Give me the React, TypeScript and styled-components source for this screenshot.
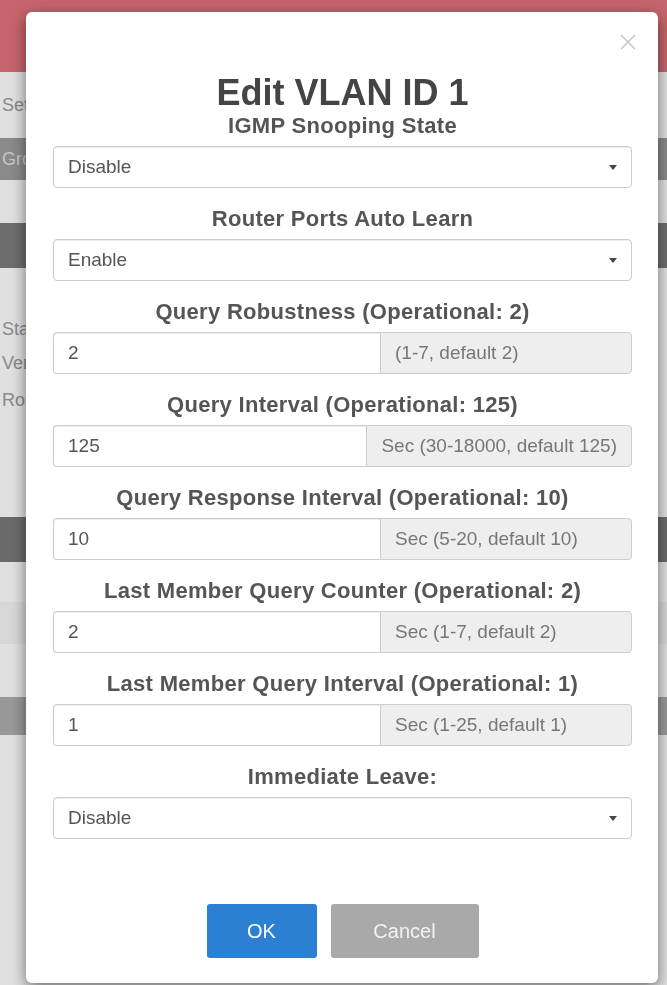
import React from "react";
import styled, { createGlobalStyle } from "styled-components";

const GlobalStyle = createGlobalStyle`
  html, body {
    margin: 0;
    padding: 0;
  }
  body {
    width: 667px;
    height: 985px;
    overflow: hidden;
    background: #ffffff;
    font-family: "Liberation Sans", Arial, sans-serif;
  }
`;

/* ---------- page behind the dialog ---------- */

const Page = styled.div`
  display: flex;
  flex-direction: column;
  height: 985px;
  background: #fafafa;
`;

const TopBar = styled.div`
  height: 72px;
  background: #dc7077;
  flex-shrink: 0;
`;

const Row = styled.div<{ $h: number; $tone?: string; $mt?: number }>`
  height: ${(p) => p.$h}px;
  margin-top: ${(p) => p.$mt ?? 0}px;
  background: ${(p) => p.$tone ?? "transparent"};
  display: flex;
  align-items: center;
  padding-left: 2px;
  flex-shrink: 0;
`;

const RowLabel = styled.span<{ $light?: boolean }>`
  white-space: nowrap;
  font-size: 18px;
  color: ${(p) => (p.$light ? "#ddd" : "#999")};
`;

/* ---------- dialog ---------- */

const Overlay = styled.div`
  position: fixed;
  inset: 0;
  background: rgba(0, 0, 0, 0.1);
  display: flex;
  align-items: flex-start;
  padding: 12px 0 0 26px;
`;

const Dialog = styled.div`
  position: relative;
  width: 632px;
  box-sizing: border-box;
  background: #fff;
  border-radius: 6px;
  box-shadow: 0 5px 15px rgba(0, 0, 0, 0.5);
  padding: 63px 26px 25px 27px;
  display: flex;
  flex-direction: column;
`;

const Close = styled.button`
  position: absolute;
  top: 22px;
  right: 22px;
  width: 16px;
  height: 16px;
  padding: 0;
  border: 0;
  background: none;
  display: flex;
`;

const Title = styled.h2`
  margin: 0 0 3px;
  font-size: 36px;
  line-height: 36px;
  font-weight: bold;
  text-align: center;
  color: #444;
`;

const Field = styled.div`
  display: flex;
  flex-direction: column;
  gap: 8px;
  margin-bottom: 19px;
`;

const Label = styled.label`
  font-size: 22px;
  letter-spacing: 0.3px;
  line-height: 24px;
  font-weight: bold;
  text-align: center;
  color: #555;
`;

const SelectButton = styled.button`
  height: 42px;
  box-sizing: border-box;
  border: 1px solid #ccc;
  border-radius: 4px;
  background: #fff;
  box-shadow: inset 0 1px 1px rgba(0, 0, 0, 0.075);
  display: flex;
  align-items: center;
  justify-content: space-between;
  padding: 0 14px 0 14px;
  font-family: inherit;
  font-size: 19px;
  color: #555;
`;

const Caret = styled.span`
  width: 0;
  height: 0;
  border-left: 4px solid transparent;
  border-right: 4px solid transparent;
  border-top: 5px solid #444;
`;

const InputGroup = styled.div`
  display: flex;
  height: 42px;
`;

const TextInput = styled.input`
  flex: 1;
  min-width: 0;
  box-sizing: border-box;
  height: 42px;
  border: 1px solid #ccc;
  border-right: 0;
  border-radius: 4px 0 0 4px;
  box-shadow: inset 0 1px 1px rgba(0, 0, 0, 0.075);
  padding: 0 14px;
  font-family: inherit;
  font-size: 19px;
  color: #555;
  outline: none;
`;

const Addon = styled.span`
  min-width: 252px;
  box-sizing: border-box;
  padding: 0 14px;
  display: flex;
  align-items: center;
  white-space: nowrap;
  background: #eee;
  border: 1px solid #ccc;
  border-radius: 0 4px 4px 0;
  font-size: 19px;
  color: #777;
`;

const Footer = styled.div`
  display: flex;
  justify-content: center;
  gap: 14px;
  margin-top: 46px;
`;

const Button = styled.button<{ $kind: "primary" | "muted" }>`
  height: 54px;
  width: ${(p) => (p.$kind === "primary" ? 110 : 148)}px;
  border: 0;
  border-radius: 3px;
  background: ${(p) => (p.$kind === "primary" ? "#2b80d4" : "#a9a9a9")};
  color: ${(p) => (p.$kind === "primary" ? "#fff" : "#f2f2f2")};
  font-family: inherit;
  font-size: 20px;
`;

type FieldDef =
  | { kind: "select"; label: string; value: string }
  | { kind: "input"; label: string; value: string; hint: string };

const fields: FieldDef[] = [
  { kind: "select", label: "IGMP Snooping State", value: "Disable" },
  { kind: "select", label: "Router Ports Auto Learn", value: "Enable" },
  { kind: "input", label: "Query Robustness (Operational: 2)", value: "2", hint: "(1-7, default 2)" },
  { kind: "input", label: "Query Interval (Operational: 125)", value: "125", hint: "Sec (30-18000, default 125)" },
  { kind: "input", label: "Query Response Interval (Operational: 10)", value: "10", hint: "Sec (5-20, default 10)" },
  { kind: "input", label: "Last Member Query Counter (Operational: 2)", value: "2", hint: "Sec (1-7, default 2)" },
  { kind: "input", label: "Last Member Query Interval (Operational: 1)", value: "1", hint: "Sec (1-25, default 1)" },
  { kind: "select", label: "Immediate Leave:", value: "Disable" },
];

const Background = () => (
  <Page>
    <TopBar />
    <Row $h={66}>
      <RowLabel>Settings</RowLabel>
    </Row>
    <Row $h={42} $tone="#9a9a9a">
      <RowLabel $light>Group</RowLabel>
    </Row>
    <Row $h={45} $tone="#7a7a7a" $mt={43} />
    <Row $h={34} $mt={44}>
      <RowLabel>State</RowLabel>
    </Row>
    <Row $h={34}>
      <RowLabel>Version</RowLabel>
    </Row>
    <Row $h={40}>
      <RowLabel>Router</RowLabel>
    </Row>
    <Row $h={45} $tone="#777" $mt={97} />
    <Row $h={42} $mt={40} $tone="#f0f0f0" />
    <Row $h={38} $mt={53} $tone="#aaa" />
  </Page>
);

export default function App() {
  return (
    <>
      <GlobalStyle />
      <Background />
      <Overlay>
        <Dialog>
          <Close aria-label="Close">
            <svg width="16" height="16" viewBox="0 0 16 16">
              <path d="M1 1L15 15M15 1L1 15" stroke="#c8c8c8" strokeWidth="1.6" />
            </svg>
          </Close>
          <Title>Edit VLAN ID 1</Title>
          {fields.map((f) => (
            <Field key={f.label}>
              <Label>{f.label}</Label>
              {f.kind === "select" ? (
                <SelectButton type="button">
                  <span>{f.value}</span>
                  <Caret />
                </SelectButton>
              ) : (
                <InputGroup>
                  <TextInput defaultValue={f.value} />
                  <Addon>{f.hint}</Addon>
                </InputGroup>
              )}
            </Field>
          ))}
          <Footer>
            <Button $kind="primary">OK</Button>
            <Button $kind="muted">Cancel</Button>
          </Footer>
        </Dialog>
      </Overlay>
    </>
  );
}
